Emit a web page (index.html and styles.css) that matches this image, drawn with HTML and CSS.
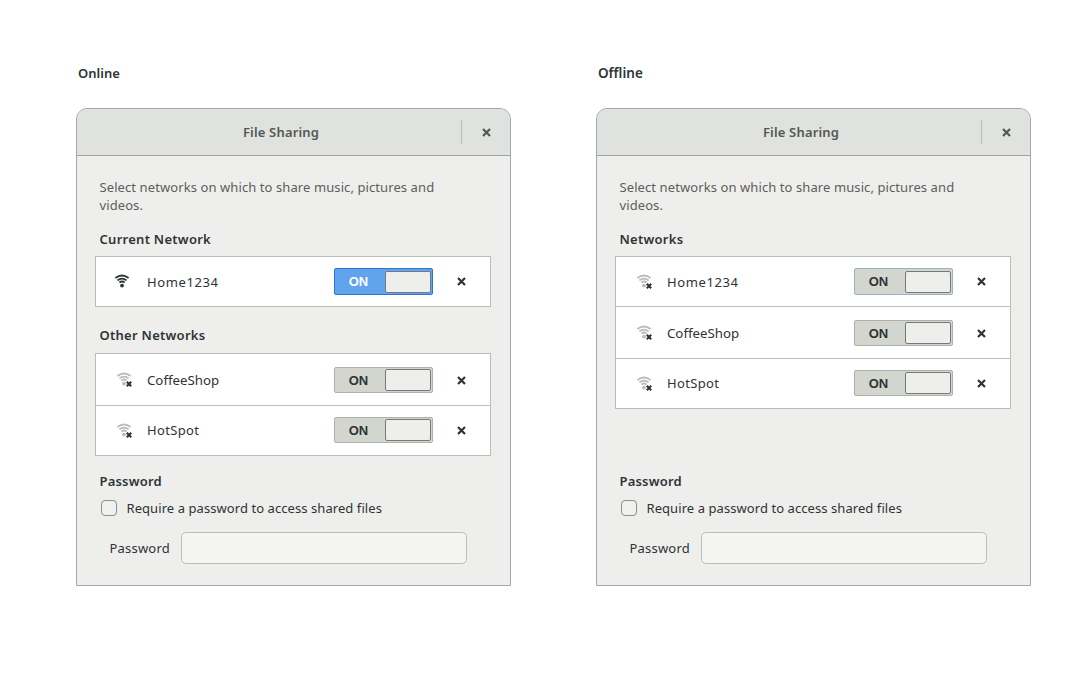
FILE: index.html
```html
<!DOCTYPE html>
<html lang="en">
<head>
<meta charset="utf-8">
<title>File Sharing</title>
<link rel="stylesheet" href="styles.css">
</head>
<body>
<svg class="symbols" aria-hidden="true">
  <symbol id="cross" viewBox="0 0 9 9"><path d="M1 1 8 8M8 1 1 8" fill="none" stroke="currentColor" stroke-width="2.2"/></symbol>
  <symbol id="small-cross" viewBox="0 0 6 6"><path d="M.8 .8 5.2 5.2M5.2 .8 .8 5.2" fill="none" stroke="currentColor" stroke-width="2.1"/></symbol>
  <symbol id="waves" viewBox="0 0 16 16"><path d="M1.4 4Q8 -1 14.6 4M3.4 6.4Q8 2.9 12.6 6.4M5.4 8.4Q8 6.6 10.6 8.4" fill="none" stroke="currentColor" stroke-width="1.8"/><circle cx="8" cy="11.6" r="1.9" fill="currentColor"/></symbol>
</svg>
<main class="board">
  <section class="mockup">
    <h1 class="state">Online</h1>
    <div class="window">
      <header class="titlebar"><span class="title">File Sharing</span><span class="close"><svg class="cross"><use href="#cross"/></svg></span></header>
      <div class="content">
        <p class="intro">Select networks on which to share music, pictures and videos.</p>
        <div class="networks">
          <h2 class="heading">Current Network</h2>
          <ul class="list">
            <li class="row"><span class="signal"><svg class="wifi"><use href="#waves"/></svg></span><span class="name digits">Home1234</span><span class="switch active tall"><span class="on">ON</span><span class="knob"></span></span><svg class="cross"><use href="#cross"/></svg></li>
          </ul>
          <h2 class="heading other">Other Networks</h2>
          <ul class="list">
            <li class="row roomy"><span class="signal off"><svg class="wifi"><use href="#waves"/></svg><svg class="badge"><use href="#small-cross"/></svg></span><span class="name">CoffeeShop</span><span class="switch"><span class="on">ON</span><span class="knob"></span></span><svg class="cross"><use href="#cross"/></svg></li>
            <li class="row last"><span class="signal off"><svg class="wifi"><use href="#waves"/></svg><svg class="badge"><use href="#small-cross"/></svg></span><span class="name spot">HotSpot</span><span class="switch"><span class="on">ON</span><span class="knob"></span></span><svg class="cross"><use href="#cross"/></svg></li>
          </ul>
        </div>
        <h2 class="heading password">Password</h2>
        <label class="require"><span class="check"></span><span class="require-text">Require a password to access shared files</span></label>
        <label class="field"><span class="field-label">Password</span><span class="entry"></span></label>
      </div>
    </div>
  </section>
  <section class="mockup">
    <h1 class="state offline">Offline</h1>
    <div class="window">
      <header class="titlebar"><span class="title">File Sharing</span><span class="close"><svg class="cross"><use href="#cross"/></svg></span></header>
      <div class="content">
        <p class="intro">Select networks on which to share music, pictures and videos.</p>
        <div class="networks">
          <h2 class="heading">Networks</h2>
          <ul class="list">
            <li class="row"><span class="signal off"><svg class="wifi"><use href="#waves"/></svg><svg class="badge"><use href="#small-cross"/></svg></span><span class="name digits">Home1234</span><span class="switch tall"><span class="on">ON</span><span class="knob"></span></span><svg class="cross"><use href="#cross"/></svg></li>
            <li class="row roomy"><span class="signal off"><svg class="wifi"><use href="#waves"/></svg><svg class="badge"><use href="#small-cross"/></svg></span><span class="name">CoffeeShop</span><span class="switch"><span class="on">ON</span><span class="knob"></span></span><svg class="cross"><use href="#cross"/></svg></li>
            <li class="row last"><span class="signal off"><svg class="wifi"><use href="#waves"/></svg><svg class="badge"><use href="#small-cross"/></svg></span><span class="name spot">HotSpot</span><span class="switch"><span class="on">ON</span><span class="knob"></span></span><svg class="cross"><use href="#cross"/></svg></li>
          </ul>
        </div>
        <h2 class="heading password">Password</h2>
        <label class="require"><span class="check"></span><span class="require-text">Require a password to access shared files</span></label>
        <label class="field"><span class="field-label">Password</span><span class="entry"></span></label>
      </div>
    </div>
  </section>
</main>
</body>
</html>
```
FILE: styles.css
```css
* { box-sizing: border-box; }
body { margin: 0; background: #fff; color: #2e3436; font: 13px/18px "Noto Sans", sans-serif; }
h1, h2, p, ul { margin: 0; padding: 0; }
svg { display: block; }
.symbols { display: none; }
.board { display: grid; grid-template-columns: 435px 435px; gap: 85px; padding: 64px 0 0 76px; }
.state { padding-left: 2px; height: 44px; font-size: 13px; font-weight: 600; line-height: 18px; }
.offline { font-size: 13.5px; }
.window { height: 478px; border: 1px solid #a4a8a4; border-radius: 11px 11px 0 0; background: #eeeeec; overflow: hidden; }
.titlebar { display: grid; grid-template-columns: 384px 49px; align-items: center; height: 47px; border-bottom: 1px solid #a1a5a1; background: #e0e2df; color: #555753; }
.title { padding-left: 24px; text-align: center; font-weight: 600; letter-spacing: .17px; }
.close { display: flex; align-items: center; height: 24px; padding: 0 0 0 19.5px; border-left: 1px solid #b9bcb8; }
.cross { width: 9px; height: 9px; }
.content { padding: 22px 19px 0 18px; }
.intro { width: 350px; height: 52px; padding-left: 4.5px; color: #5c5e5b; line-height: 18px; letter-spacing: .09px; }
.networks { height: 242px; }
.heading { height: 26px; padding-left: 4.5px; font-size: 13px; font-weight: 600; line-height: 18px; letter-spacing: .27px; }
.other { margin-top: 19px; height: 27px; }
.password { height: 27px; letter-spacing: .2px; }
.list { list-style: none; border: 1px solid #babdb6; background: #fff; }
.row { display: grid; grid-template-columns: 51px 187px 99px 9px; align-items: center; height: 50px; border-bottom: 1px solid #babdb6; }
.row > .cross { margin-left: 23.5px; }
.row:last-child { height: 49px; border-bottom: 0; }
.row.roomy { height: 52px; padding-top: 1px; }
.row.last { padding-bottom: 1px; }
.name { padding-bottom: 1px; font-size: 13.25px; }
.digits { padding-bottom: 0; font-size: 13px; letter-spacing: .6px; }
.spot { padding-bottom: 0; font-size: 13px; letter-spacing: .35px; }
.signal { position: relative; width: 16px; height: 16px; margin-left: 18px; }
.wifi { width: 16px; height: 16px; }
.off { margin-left: 20px; }
.last .signal { margin-top: 2px; }
.off .wifi { color: #b9bcb8; }
.badge { position: absolute; left: 10px; top: 9px; width: 6px; height: 6px; }
.switch { display: flex; align-items: center; width: 99px; height: 26px; border: 1px solid #abb1ad; border-radius: 2px; background: #d3d6cf; }
.tall { height: 27px; border-color: #9db2bf; }
.active { border-color: #2478d3; background: #61a3ed; color: #fff; }
.on { width: 50px; padding: 1px 3px 0 0; text-align: center; font: 700 13px/18px "Liberation Sans", sans-serif; }
.knob { width: 46px; height: 22px; border: 1px solid #777b77; border-radius: 2px; background: #eeeeec; }
.require { display: flex; align-items: center; height: 18px; padding-left: 6px; gap: 9.5px; letter-spacing: .07px; }
.check { width: 16px; height: 16px; border: 1px solid #8b8e8a; border-radius: 4px; background: #f0f0ee; }
.field { display: flex; align-items: center; height: 32px; margin-top: 15px; padding-left: 14.5px; }
.field-label { width: 71.5px; letter-spacing: .2px; }
.entry { width: 286px; height: 32px; border: 1px solid #babdb6; border-radius: 5px; background: #f4f4f2; }
```
